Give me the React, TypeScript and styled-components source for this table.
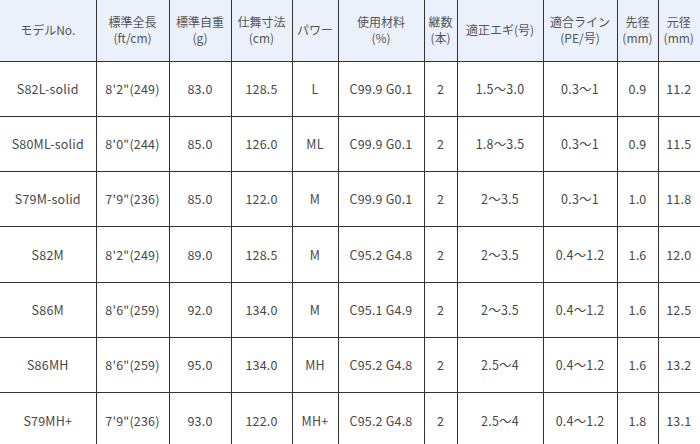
import { FunctionComponent, JSX } from 'react';
import styled, { createGlobalStyle } from 'styled-components';

const GlobalStyle = createGlobalStyle`
  html, body {
    margin: 0;
    padding: 0;
    background: #ffffff;
    overflow: hidden;
  }
`;

const columns: { label: string[]; width: number }[] = [
  { label: ['モデルNo.'], width: 96 },
  { label: ['標準全長', '(ft/cm)'], width: 73 },
  { label: ['標準自重', '(g)'], width: 62 },
  { label: ['仕舞寸法', '(cm)'], width: 61 },
  { label: ['パワー'], width: 46 },
  { label: ['使用材料', '(%)'], width: 86 },
  { label: ['継数', '(本)'], width: 33 },
  { label: ['適正エギ(号)'], width: 86 },
  { label: ['適合ライン', '(PE/号)'], width: 74 },
  { label: ['先径', '(mm)'], width: 41 },
  { label: ['元径', '(mm)'], width: 50 },
];

const rods: string[][] = [
  ['S82L-solid', `8'2"(249)`, '83.0', '128.5', 'L', 'C99.9 G0.1', '2', '1.5～3.0', '0.3～1', '0.9', '11.2'],
  ['S80ML-solid', `8'0"(244)`, '85.0', '126.0', 'ML', 'C99.9 G0.1', '2', '1.8～3.5', '0.3～1', '0.9', '11.5'],
  ['S79M-solid', `7'9"(236)`, '85.0', '122.0', 'M', 'C99.9 G0.1', '2', '2～3.5', '0.3～1', '1.0', '11.8'],
  ['S82M', `8'2"(249)`, '89.0', '128.5', 'M', 'C95.2 G4.8', '2', '2～3.5', '0.4～1.2', '1.6', '12.0'],
  ['S86M', `8'6"(259)`, '92.0', '134.0', 'M', 'C95.1 G4.9', '2', '2～3.5', '0.4～1.2', '1.6', '12.5'],
  ['S86MH', `8'6"(259)`, '95.0', '134.0', 'MH', 'C95.2 G4.8', '2', '2.5～4', '0.4～1.2', '1.6', '13.2'],
  ['S79MH+', `7'9"(236)`, '93.0', '122.0', 'MH+', 'C95.2 G4.8', '2', '2.5～4', '0.4～1.2', '1.8', '13.1'],
];

const Frame = styled.div`
  width: 700px;
  height: 444px;
  overflow: hidden;
  font-family: 'Noto Sans CJK JP', 'Noto Sans', sans-serif;
`;

const SpecTable = styled.table`
  border-collapse: collapse;
  table-layout: fixed;
  width: ${columns.reduce((sum, c) => sum + c.width, 0)}px;
  color: #484848;
`;

const HeadRow = styled.tr`
  height: 61px;
  background: #eaf1fb;
`;

const HeadCell = styled.th`
  font-weight: 400;
  font-size: 12px;
  line-height: 16px;
  color: #555;
  text-align: center;
  vertical-align: middle;
  padding: 0;
  border-left: 1px solid #333;
  border-bottom: 1px solid #333;
  white-space: nowrap;
  &:first-child {
    border-left: none;
  }
  &:last-child {
    padding-right: 9px;
  }
`;

const BodyRow = styled.tr`
  height: 55.33px;
`;

const Cell = styled.td`
  font-size: 12.5px;
  line-height: 16px;
  text-align: center;
  vertical-align: middle;
  padding: 0;
  border-left: 1px solid #333;
  border-bottom: 1px solid #333;
  white-space: nowrap;
  letter-spacing: 0.2px;
  &:first-child {
    border-left: none;
  }
  &:last-child {
    padding-right: 9px;
  }
`;

const App: FunctionComponent = (): JSX.Element => {
  return (
    <>
      <GlobalStyle />
      <Frame>
        <SpecTable>
          <colgroup>
            {columns.map((c, i) => (
              <col key={i} style={{ width: c.width }} />
            ))}
          </colgroup>
          <thead>
            <HeadRow>
              {columns.map((c, i) => (
                <HeadCell key={i}>
                  {c.label.map((line, j) => (
                    <div key={j}>{line}</div>
                  ))}
                </HeadCell>
              ))}
            </HeadRow>
          </thead>
          <tbody>
            {rods.map((rod) => (
              <BodyRow key={rod[0]}>
                {rod.map((value, i) => (
                  <Cell key={i}>{value}</Cell>
                ))}
              </BodyRow>
            ))}
          </tbody>
        </SpecTable>
      </Frame>
    </>
  );
};

export default App;
